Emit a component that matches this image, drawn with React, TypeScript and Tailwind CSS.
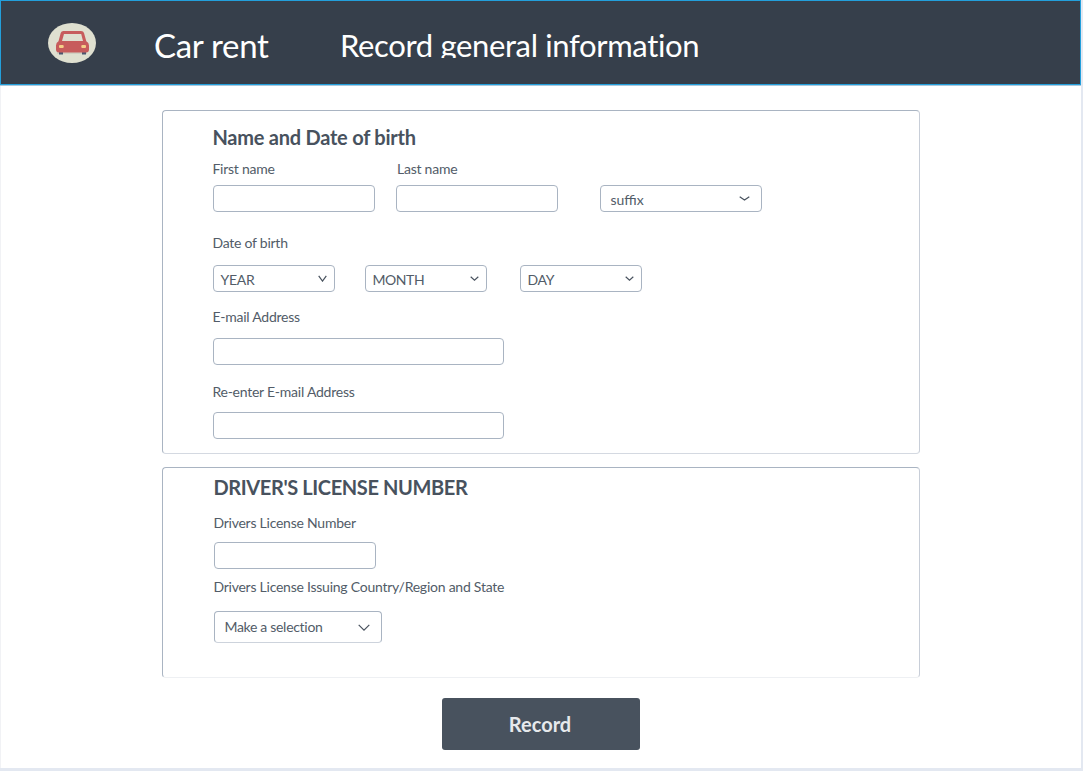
import React from "react";

function Chevron({ w = 10, h = 6, className = "" }: { w?: number; h?: number; className?: string }) {
  return (
    <svg width={w} height={h} viewBox={`0 0 ${w} ${h}`} fill="none" className={`shrink-0 ${className}`}>
      <path d={`M0.7 0.8L${w / 2} ${h - 0.9}L${w - 0.7} 0.8`} stroke="#48525e" strokeWidth="1.2" />
    </svg>
  );
}

function Select({ text, className, children }: { text: string; className: string; children: React.ReactNode }) {
  return (
    <button type="button" className={`flex items-center justify-between rounded-[4px] border border-[#a9b4c2] bg-white text-[#525c68] ${className}`}>
      <span className="whitespace-nowrap">{text}</span>
      {children}
    </button>
  );
}

function Field({ className }: { className: string }) {
  return <input type="text" className={`block h-[27px] rounded-[4px] border border-[#a9b4c2] bg-white ${className}`} />;
}

function Label({ children, className = "" }: { children: string; className?: string }) {
  return <div className={`-ml-[0.6px] h-5 leading-5 tracking-[-0.24px] whitespace-nowrap text-[#525c68] ${className}`}>{children}</div>;
}

function CarLogo() {
  return (
    <svg width="48" height="40" viewBox="0 0 48 40" className="mt-[22px] shrink-0">
      <ellipse cx="24" cy="20" rx="24" ry="20" fill="#dfe0d0" />
      <path d="M9 29.5h30v1H9z" fill="#bfc0b4" />
      <path d="M11 28h4v3.5h-4zM34 28h4v3.5h-4z" fill="#4c5770" />
      <path
        fillRule="evenodd"
        d="M15.5 8H33Q35.5 8 36 10L38.3 18.2Q41 19.8 41 22.5V26.5Q41 29.4 38 29.4H11Q8 29.4 8 26.5V22.5Q8 19.8 10.5 18.2L12.7 10Q13.3 8 15.5 8ZM16 11L14 18H35L33.2 11Z"
        fill="#c75c5c"
      />
      <rect x="11" y="22" width="4.7" height="3" rx="1" fill="#f5cf87" />
      <rect x="33.3" y="22" width="4.7" height="3" rx="1" fill="#f5cf87" />
    </svg>
  );
}

export default function App() {
  return (
    <div className="h-[771px] w-[1083px] overflow-hidden bg-[#e3e8f1] font-['Lato',sans-serif] text-[14px] text-[#48525e]">
      <div className="flex h-[768px] w-[1081px] flex-col items-start border-l border-[#f1f2f5] bg-white">
        <header className="-ml-px flex h-[85px] w-[1081px] shrink-0 border border-[#239fdb] bg-[#363f4b] text-white shadow-[0_1px_0_#a9c8dd]">
          <div className="ml-[46.5px]">
            <CarLogo />
          </div>
          <div className="mt-[24px] ml-[58.5px] h-10 w-[186px] text-[33px] leading-10 tracking-[-0.3px] whitespace-nowrap">Car rent</div>
          <h1 className="mt-[24px] h-[33px] overflow-hidden text-[31px] leading-10 tracking-[-0.35px] whitespace-nowrap">Record general information</h1>
        </header>

        <main className="ml-[161px] flex w-[758px] flex-col items-center pt-[25px]">
          <section className="h-[344px] w-full rounded-[4px] border border-[#a9b4c2] border-r-[#c8ced8] border-b-[#d4d9e1] pt-[12px] pl-[50px]">
            <h2 className="-ml-[0.6px] h-7 text-[20px] leading-7 font-bold tracking-[-0.24px]">Name and Date of birth</h2>
            <div className="mt-[8px] flex">
              <Label className="w-[185.2px]">First name</Label>
              <Label>Last name</Label>
            </div>
            <div className="mt-[6px] flex">
              <Field className="w-[162px]" />
              <Field className="ml-[21px] w-[162px]" />
              <Select text="suffix" className="ml-[42px] h-[27px] w-[162px] pt-px pr-[11.5px] pl-[9.4px]">
                <Chevron w={11} h={5} className="-mt-px" />
              </Select>
            </div>
            <Label className="mt-[21px]">Date of birth</Label>
            <div className="mt-[12px] flex">
              <Select text="YEAR" className="h-[27px] w-[122px] pt-px pr-[7.5px] pl-[6.4px] tracking-[-0.24px]">
                <Chevron w={9} h={7} className="-mt-px" />
              </Select>
              <Select text="MONTH" className="ml-[30px] h-[27px] w-[122px] pt-px pr-[7.5px] pl-[6.4px] tracking-[-0.4px]">
                <Chevron w={9} h={5} className="-mt-px" />
              </Select>
              <Select text="DAY" className="ml-[33px] h-[27px] w-[122px] pt-px pr-[7.5px] pl-[6.4px] tracking-[-0.3px]">
                <Chevron w={9} h={5} className="-mt-px" />
              </Select>
            </div>
            <Label className="mt-[15px]">E-mail Address</Label>
            <Field className="mt-[11px] w-[291px]" />
            <Label className="mt-[17px]">Re-enter E-mail Address</Label>
            <Field className="mt-[10px] w-[291px]" />
          </section>

          <section className="mt-[13px] h-[211px] w-full rounded-[4px] border border-[#a9b4c2] border-r-[#c8ced8] border-b-[#eef0f3] pt-[5px] pl-[51px]">
            <h2 className="-ml-[0.6px] h-7 text-[20px] leading-7 font-bold tracking-[-0.38px]">DRIVER'S LICENSE NUMBER</h2>
            <Label className="mt-[12px]">Drivers License Number</Label>
            <Field className="mt-[9px] w-[162px]" />
            <Label className="mt-[8px]">Drivers License Issuing Country/Region and State</Label>
            <Select text="Make a selection" className="mt-[14px] h-[32px] w-[168px] border-b-[#cdd3dc] pr-[11.5px] pb-px pl-[9.4px] tracking-[-0.3px]">
              <Chevron w={12} h={7} className="mt-px" />
            </Select>
          </section>

          <button type="button" className="mt-[20px] h-[52px] w-[198px] rounded-[3px] bg-[#48525e] pr-[2px] text-[20px] font-bold text-[#e6e9ec]">
            Record
          </button>
        </main>
      </div>
    </div>
  );
}
